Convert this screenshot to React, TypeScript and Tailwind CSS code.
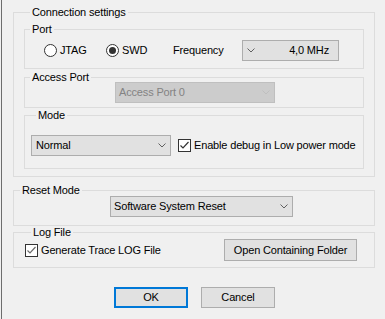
import React from "react";

const Chevron = ({ color = "#606060" }: { color?: string }) => (
  <svg width="8" height="5" viewBox="0 0 8 5" className="shrink-0">
    <polyline points="0.5,0.5 4,4 7.5,0.5" fill="none" stroke={color} strokeWidth="1" />
  </svg>
);

const Radio = ({ checked }: { checked?: boolean }) => (
  <span className="w-[13px] h-[13px] rounded-full border border-[#333333] bg-white flex items-center justify-center shrink-0">
    {checked && <span className="w-[7px] h-[7px] rounded-full bg-[#333333]" />}
  </span>
);

const Check = ({ color = "#333333" }: { color?: string }) => (
  <span className="w-[13px] h-[13px] border border-[#333333] bg-white flex items-center justify-center shrink-0">
    <svg width="11" height="11" viewBox="0 0 11 11">
      <polyline points="1.5,5.5 4,8 9.5,2" fill="none" stroke={color} strokeWidth="1.2" />
    </svg>
  </span>
);

const Legend = ({ children, sub }: { children: React.ReactNode; sub?: boolean }) => (
  <legend className={`${sub ? "ml-[5px]" : "ml-[6px]"} px-[2px] leading-[13px]`}>{children}</legend>
);

export default function App() {
  return (
    <div className="w-[385px] h-[319px] bg-[#f0f0f0] pl-px font-['Liberation_Sans',Arial,sans-serif] text-[11px] tracking-[-0.16px] text-black overflow-hidden">
      <div className="h-full border-l border-[#6d6d6d] pl-[11px] pt-[6px]">
        {/* Connection settings */}
        <fieldset className="w-[362px] border border-[#dcdcdc] px-[10px] pb-[7px]">
          <Legend>Connection settings</Legend>

          {/* Port */}
          <fieldset className="mt-[4px] border border-[#dcdcdc] pt-[4px] pb-[7px]">
            <Legend sub>Port</Legend>
            <div className="flex items-center h-[21px] pl-[19px]">
              <div className="flex items-center w-[62px]">
                <Radio />
                <span className="ml-[3px]">JTAG</span>
              </div>
              <div className="flex items-center w-[67px]">
                <Radio checked />
                <span className="ml-[3px]">SWD</span>
              </div>
              <span className="w-[69px]">Frequency</span>
              <div className="w-[97px] h-[21px] bg-[#e1e1e1] border border-[#adadad] flex items-center pl-[4px] pr-[9px]">
                <Chevron />
                <span className="ml-auto">4,0 MHz</span>
              </div>
            </div>
          </fieldset>

          {/* Access Port */}
          <fieldset className="mt-[2px] border border-[#dcdcdc] pb-[4px]">
            <Legend sub>Access Port</Legend>
            <div className="-mt-[2px] ml-[90px] w-[160px] h-[21px] bg-[#cccccc] border border-[#bfbfbf] flex items-center pl-[3px] pr-[4px] text-[#838383]">
              <span>Access Port 0</span>
              <span className="ml-auto">
                <Chevron color="#bfbfbf" />
              </span>
            </div>
          </fieldset>

          {/* Mode */}
          <fieldset className="mt-[1px] border border-[#dcdcdc] pt-[13px] pb-[12px] pl-[6px]">
            <Legend sub>Mode</Legend>
            <div className="flex items-center">
              <div className="w-[140px] h-[21px] bg-[#e1e1e1] border border-[#adadad] flex items-center pl-[4px] pr-[4px]">
                <span>Normal</span>
                <span className="ml-auto">
                  <Chevron />
                </span>
              </div>
              <div className="flex items-center ml-[7px]">
                <Check />
                <span className="ml-[3px]">Enable debug in Low power mode</span>
              </div>
            </div>
          </fieldset>
        </fieldset>

        {/* Reset Mode */}
        <fieldset className="mt-[7px] w-[362px] border border-[#dcdcdc] pb-[8px]">
          <Legend>Reset Mode</Legend>
          <div className="-mt-[1px] ml-[96px] w-[183px] h-[21px] bg-[#e1e1e1] border border-[#adadad] flex items-center pl-[3px] pr-[4px]">
            <span>Software System Reset</span>
            <span className="ml-auto">
              <Chevron />
            </span>
          </div>
        </fieldset>

        {/* Log File */}
        <fieldset className="w-[362px] border border-[#dcdcdc] pl-[11px] pr-[17px] pb-[6px]">
          <Legend>Log File</Legend>
          <div className="flex items-center justify-between h-[22px]">
            <div className="flex items-center">
              <Check color="#6a6a6a" />
              <span className="ml-[3px]">Generate Trace LOG File</span>
            </div>
            <div className="w-[133px] h-[22px] bg-[#e1e1e1] border border-[#adadad] flex items-center justify-center">
              Open Containing Folder
            </div>
          </div>
        </fieldset>

        {/* Buttons */}
        <div className="flex mt-[19px] pl-[101px] gap-[13px]">
          <div className="w-[74px] h-[21px] bg-[#e1e1e1] border-2 border-[#0078d7] flex items-center justify-center">
            OK
          </div>
          <div className="w-[74px] h-[21px] bg-[#e1e1e1] border border-[#adadad] flex items-center justify-center">
            Cancel
          </div>
        </div>
      </div>
    </div>
  );
}
